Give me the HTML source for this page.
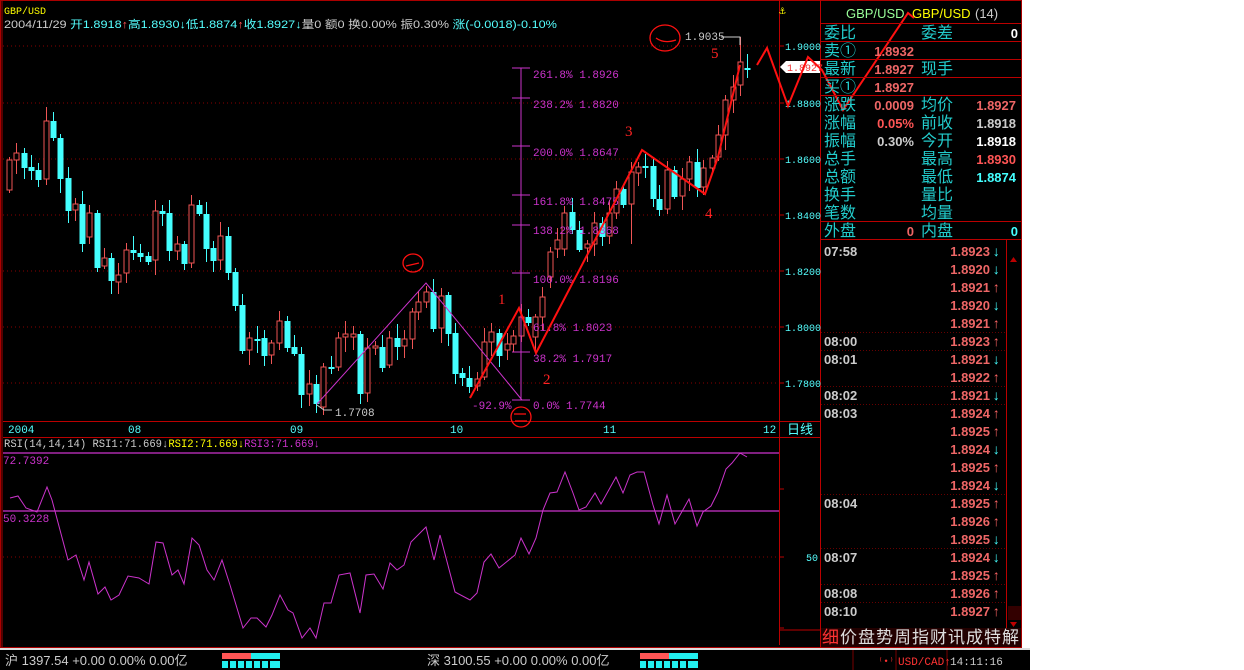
<!DOCTYPE html>
<html><head><meta charset="utf-8"><style>
*{margin:0;padding:0}
body{width:1244px;height:670px;background:#fff;overflow:hidden;position:relative;font-family:"Liberation Sans","Noto Sans CJK SC",sans-serif}
#main{position:absolute;left:0;top:0;width:1022px;height:648px;background:#000}
#bar{position:absolute;left:0;top:648px;width:1030px;height:22px;background:#000;border-top:2px solid #ddd;box-sizing:border-box}
svg text{font-family:"Liberation Mono","Noto Sans CJK SC",monospace}
.cn{font-family:"Liberation Sans","Noto Sans CJK SC",sans-serif !important}
</style></head><body>
<div id="main">
<svg width="1022" height="648" xmlns="http://www.w3.org/2000/svg">
<rect x="0.5" y="0.5" width="1021" height="647" fill="none" stroke="#a00" />
<line x1="2" y1="0" x2="2" y2="648" stroke="#a00"/>
<g stroke="#800" stroke-dasharray="1,3">
<line x1="3" y1="46" x2="779" y2="46"/><line x1="3" y1="103" x2="779" y2="103"/><line x1="3" y1="159" x2="779" y2="159"/><line x1="3" y1="215" x2="779" y2="215"/><line x1="3" y1="271" x2="779" y2="271"/><line x1="3" y1="327" x2="779" y2="327"/><line x1="3" y1="383" x2="779" y2="383"/>
<line x1="3" y1="557" x2="779" y2="557"/>
</g>
<g stroke="#b00"><line x1="779.5" y1="0" x2="779.5" y2="645"/><line x1="820.5" y1="0" x2="820.5" y2="648"/>
<line x1="3" y1="421.5" x2="820" y2="421.5"/><line x1="3" y1="437.5" x2="820" y2="437.5"/>
<line x1="779" y1="630" x2="820" y2="630"/></g>
<g stroke="#b00" stroke-width="1">
<line x1="779" y1="46" x2="784" y2="46"/><line x1="779" y1="103" x2="784" y2="103"/><line x1="779" y1="159" x2="784" y2="159"/><line x1="779" y1="215" x2="784" y2="215"/><line x1="779" y1="271" x2="784" y2="271"/><line x1="779" y1="327" x2="784" y2="327"/><line x1="779" y1="383" x2="784" y2="383"/>
<line x1="779" y1="489" x2="784" y2="489"/><line x1="779" y1="557" x2="784" y2="557"/><line x1="779" y1="628" x2="784" y2="628"/>
</g>
<text x="4" y="14" fill="#ff0" font-size="10">GBP/USD</text>
<text y="28" font-size="11" class="cn" textLength="553" lengthAdjust="spacingAndGlyphs" x="4"><tspan fill="#ccc">2004/11/29 </tspan><tspan fill="#5ff">开1.8918</tspan><tspan fill="#f55">↑</tspan><tspan fill="#5ff">高1.8930</tspan><tspan fill="#5ff">↓</tspan><tspan fill="#5ff">低1.8874</tspan><tspan fill="#f55">↑</tspan><tspan fill="#5ff">收1.8927</tspan><tspan fill="#5ff">↓</tspan><tspan fill="#ccc">量0 额0 换0.00% 振0.30% </tspan><tspan fill="#5ff">涨(-0.0018)-0.10%</tspan></text>
<g fill="#5ff" font-size="10">
<text x="785" y="50">1.9000</text><text x="785" y="107">1.8800</text><text x="785" y="163">1.8600</text><text x="785" y="219">1.8400</text><text x="785" y="275">1.8200</text><text x="785" y="331">1.8000</text><text x="785" y="387">1.7800</text>
<text x="806" y="561">50</text>
</g>
<path d="M780 67 L786 61 H820 V73 H786 Z" fill="#fff"/><text x="787" y="71" fill="#e33" font-size="10">1.8927</text>
<text x="779" y="14" fill="#ff0" font-size="11">⚓</text>
<g fill="#5ff" font-size="11"><text x="8" y="433">2004</text><text x="128" y="433">08</text><text x="290" y="433">09</text><text x="450" y="433">10</text><text x="603" y="433">11</text><text x="763" y="433">12</text></g>
<text x="787" y="434" fill="#5ff" font-size="13" class="cn">日线</text>
<g id="candles"></g>
<g stroke="#c3c" fill="none"><line x1="521" y1="68" x2="521" y2="400"/>
<line x1="512" y1="68" x2="530" y2="68"/><line x1="512" y1="98" x2="530" y2="98"/><line x1="512" y1="146" x2="530" y2="146"/><line x1="512" y1="195" x2="530" y2="195"/><line x1="512" y1="225" x2="530" y2="225"/><line x1="512" y1="273" x2="530" y2="273"/><line x1="512" y1="352" x2="530" y2="352"/><line x1="512" y1="400" x2="530" y2="400"/>
<polyline points="317,404 426,283 522,400"/></g>
<g fill="#c3c" font-size="11"><text x="533" y="78">261.8% 1.8926</text><text x="533" y="108">238.2% 1.8820</text><text x="533" y="156">200.0% 1.8647</text><text x="533" y="205">161.8% 1.8475</text><text x="533" y="234">138.2% 1.8368</text><text x="533" y="283">100.0% 1.8196</text><text x="533" y="331">61.8% 1.8023</text><text x="533" y="362">38.2% 1.7917</text><text x="533" y="409">0.0% 1.7744</text><text x="472" y="409">-92.9%</text></g>
<path d="M317 405 L324 410 L332 410" stroke="#ccc" fill="none"/><text x="335" y="416" fill="#ccc" font-size="11">1.7708</text>
<path d="M721 37 L740 37 L740 45" stroke="#ccc" fill="none"/><text x="685" y="40" fill="#ccc" font-size="11">1.9035</text>
<g stroke="#f11" stroke-width="2" fill="none">
<polyline points="470,398 519,308 536,353 642,150 705,194 718,157 740,65"/>
<polyline points="757,65 767,48 788,106 808,57 822,70 843,110 908,13 914,18"/>
<ellipse cx="413" cy="263" rx="10" ry="9" stroke-width="1.3"/><path d="M406 266 L419 263" stroke-width="1.3"/>
<ellipse cx="521" cy="417" rx="10" ry="10" stroke-width="1.3"/><path d="M514 414 H526 M515 421 H527" stroke-width="1.3"/>
<ellipse cx="665" cy="38" rx="15" ry="13" stroke-width="1.3"/><path d="M656 38 Q664 44 676 40" stroke-width="1.3"/>
</g>
<g fill="#f22" font-size="15"><text x="498" y="304" style="font-family:'Liberation Serif',serif">1</text><text x="543" y="384" style="font-family:'Liberation Serif',serif">2</text><text x="625" y="136" style="font-family:'Liberation Serif',serif">3</text><text x="705" y="218" style="font-family:'Liberation Serif',serif">4</text><text x="711" y="58" style="font-family:'Liberation Serif',serif">5</text></g>
<text y="447" font-size="11" x="4" textLength="316" lengthAdjust="spacingAndGlyphs"><tspan fill="#ccc">RSI(14,14,14) RSI1:71.669↓</tspan><tspan fill="#ff0">RSI2:71.669↓</tspan><tspan fill="#c3c">RSI3:71.669↓</tspan></text>
<g stroke="#c3c" stroke-width="1.3"><line x1="3" y1="453" x2="779" y2="453"/><line x1="3" y1="511" x2="779" y2="511"/></g>
<text x="3" y="464" fill="#c3c" font-size="11">72.7392</text><text x="3" y="522" fill="#c3c" font-size="11">50.3228</text>
<polyline fill="none" stroke="#c3c" points="10,498 18,496 26,508 37,512 47,487 52,500 68,560 76,555 84,580 89,562 98,594 105,587 111,600 119,595 128,576 139,578 149,584 156,542 163,543 172,575 178,570 184,584 192,538 199,545 207,570 214,580 222,560 230,585 243,628 251,618 257,618 266,627 272,615 280,595 288,610 293,613 302,638 310,628 316,638 324,603 331,603 339,575 350,573 360,613 366,575 374,574 383,589 390,563 397,570 404,565 411,542 426,527 434,560 440,535 455,592 470,600 477,593 484,562 491,554 499,568 515,555 521,538 529,554 536,538 543,510 550,493 557,492 565,472 573,493 579,510 586,507 595,493 601,504 616,477 623,493 630,475 637,472 644,472 653,505 659,524 667,495 675,524 689,499 697,526 703,512 711,506 718,492 726,469 732,463 740,453 747,457"/>
<g id="panel"></g>
</svg>
</div>
<div id="bar">
<svg width="1030" height="20" style="position:absolute;left:0;top:0">
<text x="5" y="15" fill="#ccc" font-size="13" class="cn">沪 1397.54 +0.00 0.00% 0.00亿</text>
<rect x="222" y="3" width="29" height="6" fill="#f55"/><rect x="251" y="3" width="29" height="6" fill="#2ee"/>
<rect x="222" y="11" width="58" height="7" fill="#2ee"/>
<g stroke="#000" stroke-width="2"><line x1="229" y1="11" x2="229" y2="18"/><line x1="237" y1="11" x2="237" y2="18"/><line x1="245" y1="11" x2="245" y2="18"/><line x1="253" y1="11" x2="253" y2="18"/><line x1="261" y1="11" x2="261" y2="18"/><line x1="269" y1="11" x2="269" y2="18"/></g>
<text x="427" y="15" fill="#ccc" font-size="13" class="cn">深 3100.55 +0.00 0.00% 0.00亿</text>
<rect x="640" y="3" width="29" height="6" fill="#f55"/><rect x="669" y="3" width="29" height="6" fill="#2ee"/>
<rect x="640" y="11" width="58" height="7" fill="#2ee"/>
<g stroke="#000" stroke-width="2"><line x1="647" y1="11" x2="647" y2="18"/><line x1="655" y1="11" x2="655" y2="18"/><line x1="663" y1="11" x2="663" y2="18"/><line x1="671" y1="11" x2="671" y2="18"/><line x1="679" y1="11" x2="679" y2="18"/><line x1="687" y1="11" x2="687" y2="18"/></g>
<line x1="853" y1="0" x2="853" y2="20" stroke="#700"/>
<line x1="896" y1="0" x2="896" y2="20" stroke="#700"/><line x1="947" y1="0" x2="947" y2="20" stroke="#700"/>
<text x="878" y="14" fill="#f33" font-size="9">⁽•⁾</text>
<text x="898" y="15" fill="#f33" font-size="11">USD/CAD↑</text>
<text x="950" y="15" fill="#ccc" font-size="11">14:11:16</text>
</svg>
</div>
<script>
var S='http://www.w3.org/2000/svg';
function el(p,t,a,txt){var e=document.createElementNS(S,t);for(var k in a)e.setAttribute(k,a[k]);if(txt!=null)e.textContent=txt;p.appendChild(e);return e;}
var d=[[9,190,160],[16,160,153],[24,153,167],[31,167,170],[38,170,179],[46,179,121],[53,121,137],[60,138,178],[68,178,210],[75,210,204],[82,204,243],[89,237,213],[97,213,267],[104,266,258],[111,258,280],[118,282,275],[126,273,250],[133,250,252],[140,253,256],[148,256,261],[155,260,211],[162,211,213],[169,213,250],[177,251,244],[184,244,263],[191,263,205],[199,205,213],[206,214,248],[213,248,260],[220,260,236],[228,236,272],[235,272,305],[242,305,350],[249,350,338],[257,339,340],[264,338,355],[271,355,343],[279,343,321],[287,321,347],[294,347,353],[301,354,394],[309,394,384],[316,384,403],[323,407,367],[331,367,368],[338,367,338],[345,337,334],[353,337,334],[360,334,393],[367,393,348],[375,348,346],[382,347,367],[389,365,338],[397,338,346],[404,346,339],[412,339,312],[418,312,302],[426,302,292],[433,292,328],[441,328,296],[448,295,333],[455,333,373],[462,373,377],[469,378,386],[477,386,379],[484,377,342],[491,342,332],[499,333,355],[507,350,344],[513,344,336],[521,336,317],[528,317,322],[535,337,317],[542,317,297],[550,277,252],[557,249,240],[564,249,213],[572,212,229],[579,230,249],[587,248,244],[594,244,223],[602,223,236],[609,236,213],[616,213,189],[623,189,204],[631,204,172],[638,173,167],[645,167,166],[653,166,198],[659,199,209],[667,209,170],[674,170,196],[682,196,179],[689,179,162],[697,162,187],[703,187,168],[712,168,158],[718,157,135],[725,135,100],[733,100,87],[740,85,62],[747,69,68]];
var g=document.getElementById('candles');
d.forEach(function(c,i){var x=c[0],o=c[1],cl=c[2];var up=cl<=o&&!(o-cl<2&&i%2);
var top=Math.min(o,cl),bot=Math.max(o,cl);if(bot-top<1)bot=top+1;
var h1=3+(i*7)%12,h2=3+(i*11)%13;if(x==740)h1=top-37;if(x==631)h2=40;
el(g,'line',{x1:x+.5,y1:top-h1,x2:x+.5,y2:bot+h2,stroke:up?'#e55':'#4ff'});
if(up)el(g,'rect',{x:x-2,y:top,width:5,height:bot-top,fill:'#000',stroke:'#e55'});
else el(g,'rect',{x:x-2.5,y:top,width:6,height:bot-top+1,fill:'#4ff'});});
var p=document.getElementById('panel');
var R='#b00';
el(p,'text',{x:846,y:18,fill:'#9f9','font-size':13,'class':'cn'},'GBP/USD');
el(p,'text',{x:912,y:18,fill:'#ff0','font-size':13,'class':'cn'},'GBP/USD');
el(p,'text',{x:975,y:18,fill:'#ccc','font-size':13,'class':'cn'},'(14)');
[23,41,59,77,95,221,239].forEach(function(y){el(p,'line',{x1:821,y1:y+.5,x2:1021,y2:y+.5,stroke:R});});
function cn(x,y,t,c){el(p,'text',{x:x,y:y,fill:c,'font-size':16,'class':'cn'},t);}
function nm(x,y,t,c){el(p,'text',{x:x,y:y,fill:c,'font-size':13,'text-anchor':'end','font-weight':'bold','class':'cn'},t);}
var C='#2cc';
cn(824,38,'委比',C);cn(921,38,'委差',C);nm(1018,38,'0','#fff');
cn(824,56,'卖①',C);nm(914,56,'1.8932','#e66');
cn(824,74,'最新',C);nm(914,74,'1.8927','#e66');cn(921,74,'现手',C);
cn(824,92,'买①',C);nm(914,92,'1.8927','#e66');
var rows=[['涨跌','0.0009','#e66','均价','1.8927','#e66'],['涨幅','0.05%','#f55','前收','1.8918','#ccc'],['振幅','0.30%','#ccc','今开','1.8918','#fff'],['总手','','','最高','1.8930','#f55'],['总额','','','最低','1.8874','#4ff'],['换手','','','量比','',''],['笔数','','','均量','','']];
rows.forEach(function(r,i){var y=110+i*18;cn(824,y,r[0],C);if(r[1])nm(914,y,r[1],r[2]);cn(921,y,r[3],C);if(r[4])nm(1016,y,r[4],r[5]);});
cn(824,236,'外盘',C);nm(914,236,'0','#e66');cn(921,236,'内盘',C);nm(1018,236,'0','#4ff');
var t=[['07:58','1.8923',0],['','1.8920',0],['','1.8921',1],['','1.8920',0],['','1.8921',1],['08:00','1.8923',1],['08:01','1.8921',0],['','1.8922',1],['08:02','1.8921',0],['08:03','1.8924',1],['','1.8925',1],['','1.8924',0],['','1.8925',1],['','1.8924',0],['08:04','1.8925',1],['','1.8926',1],['','1.8925',0],['08:07','1.8924',0],['','1.8925',1],['08:08','1.8926',1],['08:10','1.8927',1]];
t.forEach(function(r,i){var y=256+i*18;if(r[0]){el(p,'text',{x:824,y:y,fill:'#ccc','font-size':13,'font-weight':'bold','class':'cn'},r[0]);if(i>0)el(p,'line',{x1:821,y1:y-13.5,x2:1006,y2:y-13.5,stroke:'#600','stroke-dasharray':'1,2'});}
nm(990,y,r[1],'#e66');el(p,'text',{x:992,y:y,fill:r[2]?'#f66':'#4ff','font-size':14,'font-weight':'bold'},r[2]?'↑':'↓');});
el(p,'line',{x1:1006.5,y1:240,x2:1006.5,y2:628,stroke:R});
el(p,'path',{d:'M1010 262 L1017 262 L1013.5 257 Z',fill:'#b00'});
el(p,'rect',{x:1008,y:606,width:13,height:14,fill:'#300'});
el(p,'path',{d:'M1010 622 L1017 622 L1013.5 627 Z',fill:'#b00'});
el(p,'rect',{x:821,y:628,width:200,height:19,fill:'#200'});
'细价盘势周指财讯成特解'.split('').forEach(function(c,i){el(p,'text',{x:822+i*18,y:643,fill:i?'#ddd':'#f33','font-size':17,'class':'cn'},c);});
</script>
</body></html>
